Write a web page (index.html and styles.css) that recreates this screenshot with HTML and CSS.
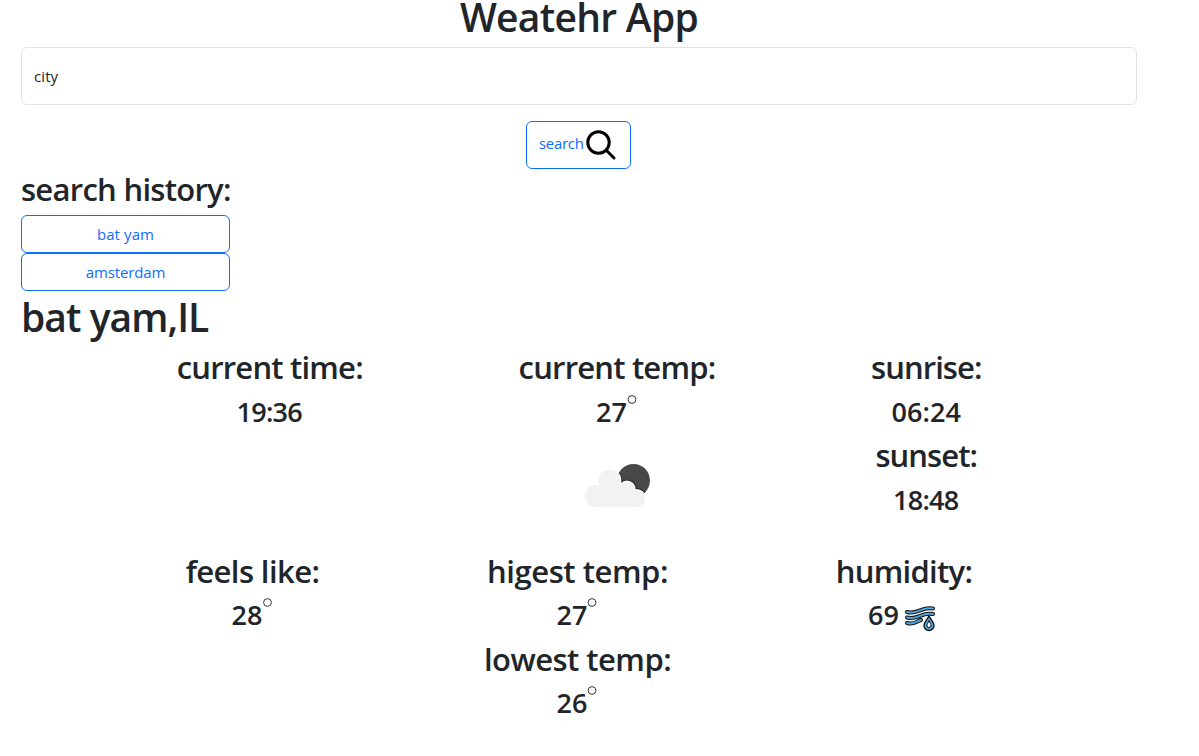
FILE: index.html
```html
<!DOCTYPE html>
<html lang="en">
<head>
<meta charset="utf-8">
<title>Weatehr App</title>
<link rel="stylesheet" href="styles.css">
</head>
<body>
<main class="app">
  <h1 class="title"><span class="t-title">Weatehr App</span></h1>
  <div class="field"><span class="t-city">city</span></div>
  <div class="search-row">
    <button class="btn search"><span class="t-search">search</span><svg class="glass" viewBox="0 0 32 32"><circle cx="13.5" cy="13.5" r="10.7"/><path d="M21.3 21.3 29 29"/></svg></button>
  </div>
  <section class="history">
    <h2><span class="t-history">search history:</span></h2>
    <button class="btn"><span class="t-bat">bat yam</span></button>
    <button class="btn"><span class="t-ams">amsterdam</span></button>
  </section>
  <h1><span class="t-place">bat yam,IL</span></h1>
  <section class="row first">
    <div class="col w-time"><h2><span class="t-time">current time:</span></h2><h3><span class="narrow">19:36</span></h3></div>
    <div class="col w-temp"><h2><span class="t-temp">current temp:</span></h2><h3><span>27</span><svg class="deg" viewBox="0 0 11 11"><circle cx="5" cy="5.5" r="3.9"/></svg></h3>
      <svg class="cloud" viewBox="0 0 100 100">
        <defs>
          <clipPath id="moon"><circle cx="66.5" cy="45.5" r="16.5"/></clipPath>
          <g id="puffs"><circle cx="29" cy="61" r="11"/><circle cx="42.3" cy="45.5" r="11"/><circle cx="60" cy="54" r="7.5"/><circle cx="69.500" cy="63.500" r="8.500"/><path d="M29 50h12l19 2 9 12v8H29z"/></g>
        </defs>
        <circle cx="66.5" cy="45.5" r="16.5" fill="#484849"/>
        <g clip-path="url(#moon)"><use href="#puffs" fill="#252526" stroke="#252526" stroke-width="4"/><use href="#puffs" fill="#fff" stroke="#fff" stroke-width="2.2"/></g>
        <use href="#puffs" fill="#f2f2f1"/>
      </svg>
    </div>
    <div class="col w-sun"><h2><span class="t-rise">sunrise:</span></h2><h3><span class="wide">06:24</span></h3><h2><span class="t-set">sunset:</span></h2><h3><span class="narrow">18:48</span></h3></div>
  </section>
  <section class="row">
    <div class="col w-feels"><h2><span class="t-feels">feels like:</span></h2><h3><span>28</span><svg class="deg" viewBox="0 0 11 11"><circle cx="5.5" cy="5.5" r="3.9"/></svg></h3></div>
    <div class="col w-high"><h2><span class="t-high">higest temp:</span></h2><h3><span>27</span><svg class="deg" viewBox="0 0 11 11"><circle cx="5" cy="5.5" r="3.9"/></svg></h3><h2><span class="t-low">lowest temp:</span></h2><h3><span>26</span><svg class="deg" viewBox="0 0 11 11"><circle cx="5" cy="5.5" r="3.9"/></svg></h3></div>
    <div class="col w-hum"><h2><span class="t-hum">humidity:</span></h2><h3><span>69</span><svg class="humid" viewBox="0 0 32 32"><defs><path id="waves" d="M3 9c10 3 14-5.500 26-3.500M3 14.500c10 3 14-5.500 26-3.500M3 20c7 2 9-1.500 14-3"/></defs><use href="#waves" class="edge"/><use href="#waves" class="core"/><path class="drop" d="M25 13c-2.200 4-5 6.500-5 9.500a5 5 0 0 0 10 0c0-3-2.800-5.500-5-9.500z"/><path class="inner" d="M25 18c-1 2-2 3-2 4.500a2 2 0 0 0 4 0c0-1.500-1-2.500-2-4.500z"/></svg></h3></div>
  </section>
</main>
</body>
</html>
```
FILE: styles.css
```css
* { box-sizing: border-box; }
body { margin: 0; background: #fff; color: #212529; font: 15px/24px "Open Sans", sans-serif; }
.app { display: flow-root; width: 1116px; margin-left: 21px; }
h1, h2, h3 { margin: 0 0 8px; font-weight: 600; white-space: nowrap; }
h1 { height: 48px; font-size: 39px; line-height: 52px; }
h2 { height: 38.4px; font-size: 31px; line-height: 40.8px; }
h3 { height: 33.6px; font-size: 27px; line-height: 36.2px; }
.title { height: 39px; line-height: 33px; text-align: center; }
.title span { display: block; }
.field { height: 58px; border: 1px solid #dee2e6; border-radius: 6px; padding: 16px 12px; }
.search-row { display: flex; justify-content: center; margin-top: 16px; }
.btn { display: block; width: 100%; height: 38px; padding: 0; border: 1px solid #0d6efd; border-radius: 6px; background: #fff; color: #0d6efd; font: 15px/24px "Open Sans", sans-serif; }
.search { display: flex; width: 105px; height: 48px; margin-right: 1px; padding: 7px 0 0 12px; }
.search span { margin-top: 2px; }
.glass { width: 32px; height: 32px; margin-left: 1px; fill: none; stroke: #000; stroke-width: 3; stroke-linecap: round; }
.history { width: 209px; }
.row { display: flex; justify-content: space-evenly; }
.first { height: 203.6px; }
.col { display: flex; flex-direction: column; align-items: center; }
.col h3 { display: flex; }
.deg { width: 11px; height: 11px; fill: none; stroke: #333; stroke-width: 1; }
.cloud { width: 100px; height: 100px; }
.humid { width: 32px; height: 32px; margin: 6px 4px 0 5px; fill: none; stroke-linecap: round; }
.edge { stroke: #111; stroke-width: 4; }
.core { stroke: #4ea6dc; stroke-width: 1.9; }
.drop { fill: #4ea6dc; stroke: #111; stroke-width: 1.3; }
.inner { fill: #fff; stroke: #111; stroke-width: 1; }

/* column widths */
.w-time { width: 186px; }
.w-temp { width: 197px; }
.w-sun { width: 110px; }
.w-feels { width: 134px; }
.w-high { width: 187px; }
.w-hum { width: 137px; }

/* tracking */
.t-title { letter-spacing: -0.7px; }
.t-city { letter-spacing: 0.1px; }
.t-search { letter-spacing: -0.3px; }
.t-history { letter-spacing: -0.72px; }
.t-bat { letter-spacing: 0.1px; }
.t-ams { letter-spacing: -0.15px; }
.t-place { letter-spacing: -0.95px; }
.t-time { letter-spacing: -0.8px; }
.t-temp { letter-spacing: -0.8px; }
.t-rise { letter-spacing: -0.95px; }
.t-set { letter-spacing: -0.95px; }
.t-feels { letter-spacing: -0.58px; }
.t-high { letter-spacing: -0.45px; }
.t-low { letter-spacing: -0.53px; }
.t-hum { letter-spacing: -0.7px; }
.narrow { margin-right: 1px; letter-spacing: -0.7px; }
.wide { letter-spacing: 0.1px; }
```
